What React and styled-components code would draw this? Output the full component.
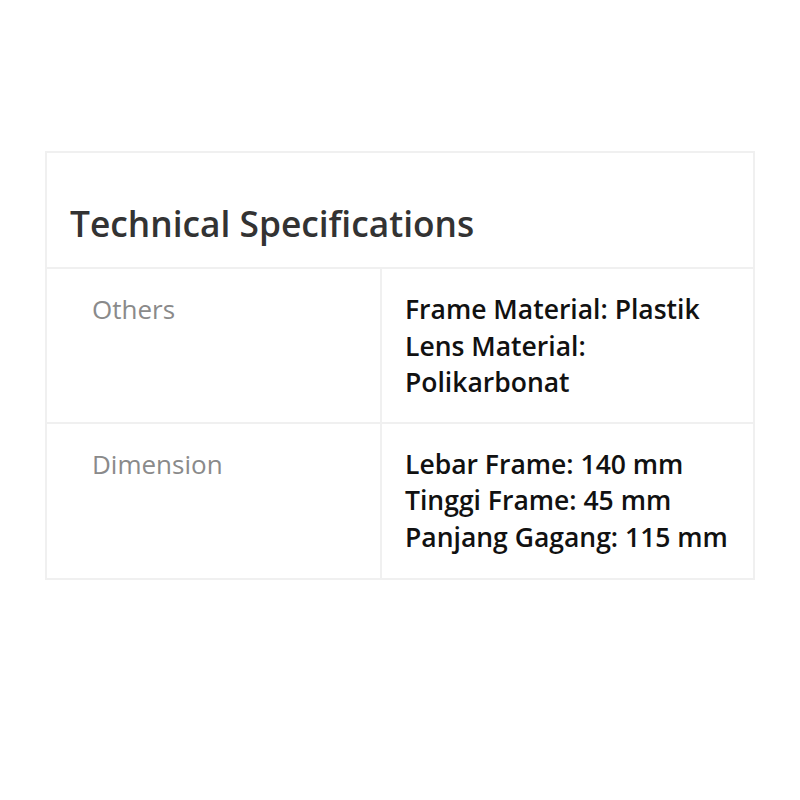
import React from "react";
import styled, { createGlobalStyle } from "styled-components";

const Global = createGlobalStyle`
  body {
    margin: 0;
    background: #fff;
    font-family: "Open Sans", "Noto Sans", sans-serif;
  }
`;

const Page = styled.div`
  padding: 151px 45px 0;
`;

const Card = styled.section`
  border: 2px solid #f0f0f0;
  background: #fff;
`;

const Title = styled.h2`
  margin: 0;
  padding: 46px 23px 20px;
  font-size: 35.3px;
  font-weight: 600;
  line-height: 48px;
  color: #333;
  border-bottom: 2px solid #f0f0f0;
`;

const Row = styled.div`
  display: grid;
  grid-template-columns: 335px 1fr;
  border-bottom: ${(p) => (p.$last ? "none" : "2px solid #f0f0f0")};
`;

const Label = styled.div`
  padding: 22px 20px ${(p) => (p.$last ? "23px" : "21px")} 45px;
  font-size: 26px;
  line-height: 36.5px;
  color: #8a8a8a;
  border-right: 2px solid #f0f0f0;
`;

const Value = styled.div`
  padding: 22px 20px ${(p) => (p.$last ? "23px" : "21px")} 23px;
  font-size: 26.5px;
  font-weight: 600;
  line-height: 36.5px;
  color: #111;
`;

const specs = [
  { label: "Others", lines: ["Frame Material: Plastik", "Lens Material: Polikarbonat"] },
  {
    label: "Dimension",
    lines: ["Lebar Frame: 140 mm", "Tinggi Frame: 45 mm", "Panjang Gagang: 115 mm"],
  },
];

export default function App() {
  return (
    <Page>
      <Global />
      <Card>
        <Title>Technical Specifications</Title>
        {specs.map((s, i) => {
          const last = i === specs.length - 1;
          return (
            <Row key={s.label} $last={last}>
              <Label $last={last}>{s.label}</Label>
              <Value $last={last}>
                {s.lines.map((l) => (
                  <div key={l}>{l}</div>
                ))}
              </Value>
            </Row>
          );
        })}
      </Card>
    </Page>
  );
}
